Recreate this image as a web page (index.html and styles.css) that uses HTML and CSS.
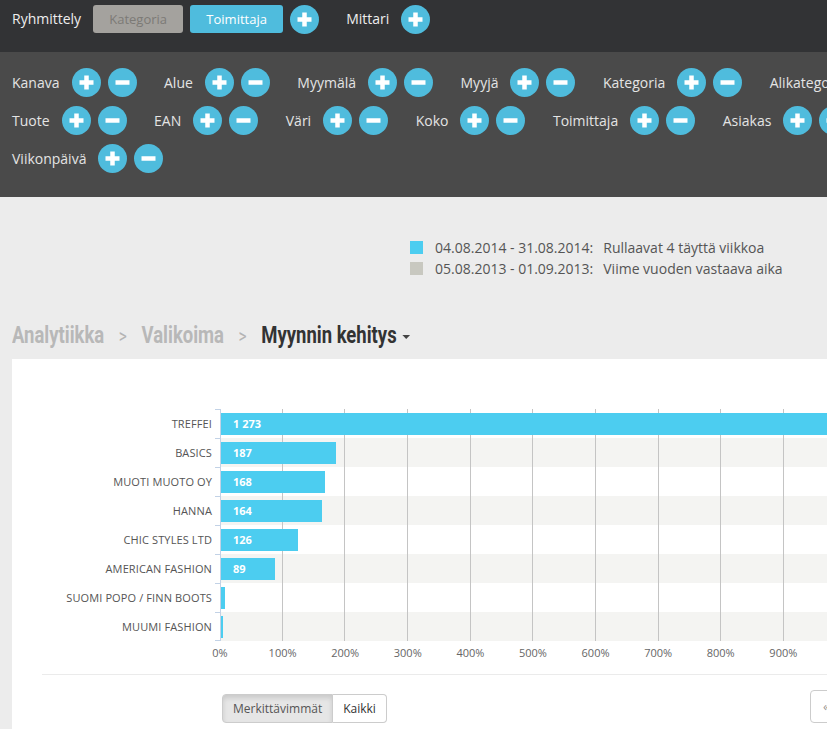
FILE: index.html
```html
<!DOCTYPE html>
<html lang="fi">
<head>
<meta charset="utf-8">
<title>Myynnin kehitys</title>
<link rel="stylesheet" href="styles.css">
</head>
<body>
<header class="topbar">
  <span class="tlabel">Ryhmittely</span>
  <span class="tbtn tbtn-off">Kategoria</span>
  <span class="tbtn tbtn-on">Toimittaja</span>
  <svg class="ic" viewBox="0 0 29 29"><circle cx="14.5" cy="14.5" r="14.5"/><path d="M7.5 14.5h14M14.5 7.5v14"/></svg>
  <span class="tlabel tlabel-gap">Mittari</span>
  <svg class="ic" viewBox="0 0 29 29"><circle cx="14.5" cy="14.5" r="14.5"/><path d="M7.5 14.5h14M14.5 7.5v14"/></svg>
</header>

<section class="filters">
  <div class="frows">
    <div class="fitem"><span class="flabel">Kanava</span><svg class="ic" viewBox="0 0 29 29"><circle cx="14.5" cy="14.5" r="14.5"/><path d="M7.5 14.5h14M14.5 7.5v14"/></svg><svg class="ic" viewBox="0 0 29 29"><circle cx="14.5" cy="14.5" r="14.5"/><path d="M7.5 14.5h14"/></svg></div>
    <div class="fitem"><span class="flabel">Alue</span><svg class="ic" viewBox="0 0 29 29"><circle cx="14.5" cy="14.5" r="14.5"/><path d="M7.5 14.5h14M14.5 7.5v14"/></svg><svg class="ic" viewBox="0 0 29 29"><circle cx="14.5" cy="14.5" r="14.5"/><path d="M7.5 14.5h14"/></svg></div>
    <div class="fitem"><span class="flabel">Myymälä</span><svg class="ic" viewBox="0 0 29 29"><circle cx="14.5" cy="14.5" r="14.5"/><path d="M7.5 14.5h14M14.5 7.5v14"/></svg><svg class="ic" viewBox="0 0 29 29"><circle cx="14.5" cy="14.5" r="14.5"/><path d="M7.5 14.5h14"/></svg></div>
    <div class="fitem"><span class="flabel">Myyjä</span><svg class="ic" viewBox="0 0 29 29"><circle cx="14.5" cy="14.5" r="14.5"/><path d="M7.5 14.5h14M14.5 7.5v14"/></svg><svg class="ic" viewBox="0 0 29 29"><circle cx="14.5" cy="14.5" r="14.5"/><path d="M7.5 14.5h14"/></svg></div>
    <div class="fitem"><span class="flabel">Kategoria</span><svg class="ic" viewBox="0 0 29 29"><circle cx="14.5" cy="14.5" r="14.5"/><path d="M7.5 14.5h14M14.5 7.5v14"/></svg><svg class="ic" viewBox="0 0 29 29"><circle cx="14.5" cy="14.5" r="14.5"/><path d="M7.5 14.5h14"/></svg></div>
    <div class="fitem"><span class="flabel">Alikategoria</span><svg class="ic" viewBox="0 0 29 29"><circle cx="14.5" cy="14.5" r="14.5"/><path d="M7.5 14.5h14M14.5 7.5v14"/></svg><svg class="ic" viewBox="0 0 29 29"><circle cx="14.5" cy="14.5" r="14.5"/><path d="M7.5 14.5h14"/></svg></div>
    <div class="fitem"><span class="flabel">Tuote</span><svg class="ic" viewBox="0 0 29 29"><circle cx="14.5" cy="14.5" r="14.5"/><path d="M7.5 14.5h14M14.5 7.5v14"/></svg><svg class="ic" viewBox="0 0 29 29"><circle cx="14.5" cy="14.5" r="14.5"/><path d="M7.5 14.5h14"/></svg></div>
    <div class="fitem"><span class="flabel">EAN</span><svg class="ic" viewBox="0 0 29 29"><circle cx="14.5" cy="14.5" r="14.5"/><path d="M7.5 14.5h14M14.5 7.5v14"/></svg><svg class="ic" viewBox="0 0 29 29"><circle cx="14.5" cy="14.5" r="14.5"/><path d="M7.5 14.5h14"/></svg></div>
    <div class="fitem"><span class="flabel">Väri</span><svg class="ic" viewBox="0 0 29 29"><circle cx="14.5" cy="14.5" r="14.5"/><path d="M7.5 14.5h14M14.5 7.5v14"/></svg><svg class="ic" viewBox="0 0 29 29"><circle cx="14.5" cy="14.5" r="14.5"/><path d="M7.5 14.5h14"/></svg></div>
    <div class="fitem"><span class="flabel">Koko</span><svg class="ic" viewBox="0 0 29 29"><circle cx="14.5" cy="14.5" r="14.5"/><path d="M7.5 14.5h14M14.5 7.5v14"/></svg><svg class="ic" viewBox="0 0 29 29"><circle cx="14.5" cy="14.5" r="14.5"/><path d="M7.5 14.5h14"/></svg></div>
    <div class="fitem"><span class="flabel">Toimittaja</span><svg class="ic" viewBox="0 0 29 29"><circle cx="14.5" cy="14.5" r="14.5"/><path d="M7.5 14.5h14M14.5 7.5v14"/></svg><svg class="ic" viewBox="0 0 29 29"><circle cx="14.5" cy="14.5" r="14.5"/><path d="M7.5 14.5h14"/></svg></div>
    <div class="fitem"><span class="flabel">Asiakas</span><svg class="ic" viewBox="0 0 29 29"><circle cx="14.5" cy="14.5" r="14.5"/><path d="M7.5 14.5h14M14.5 7.5v14"/></svg><svg class="ic" viewBox="0 0 29 29"><circle cx="14.5" cy="14.5" r="14.5"/><path d="M7.5 14.5h14"/></svg></div>
    <div class="fitem"><span class="flabel">Viikonpäivä</span><svg class="ic" viewBox="0 0 29 29"><circle cx="14.5" cy="14.5" r="14.5"/><path d="M7.5 14.5h14M14.5 7.5v14"/></svg><svg class="ic" viewBox="0 0 29 29"><circle cx="14.5" cy="14.5" r="14.5"/><path d="M7.5 14.5h14"/></svg></div>
  </div>
</section>

<div class="legend">
  <span class="sw sw-cur"></span><span class="ldate">04.08.2014 - 31.08.2014:</span><span class="ldesc">Rullaavat 4 täyttä viikkoa</span>
  <span class="sw sw-prev"></span><span class="ldate">05.08.2013 - 01.09.2013:</span><span class="ldesc">Viime vuoden vastaava aika</span>
</div>

<nav class="crumbs">
  <span class="crumbs-inner"><span class="crumb">Analytiikka</span><span class="csep">&gt;</span><span class="crumb">Valikoima</span><span class="csep">&gt;</span><span class="crumb crumb-cur">Myynnin kehitys</span><span class="caret"></span></span>
</nav>

<main class="panel">
  <div class="chart">
    <div class="row"><span class="rlabel">TREFFEI</span><div class="rplot"><div class="bar" style="width:820px">1 273</div></div></div>
    <div class="row"><span class="rlabel">BASICS</span><div class="rplot"><div class="bar" style="width:115px">187</div></div></div>
    <div class="row"><span class="rlabel">MUOTI MUOTO OY</span><div class="rplot"><div class="bar" style="width:104px">168</div></div></div>
    <div class="row"><span class="rlabel">HANNA</span><div class="rplot"><div class="bar" style="width:101px">164</div></div></div>
    <div class="row"><span class="rlabel">CHIC STYLES LTD</span><div class="rplot"><div class="bar" style="width:77px">126</div></div></div>
    <div class="row"><span class="rlabel">AMERICAN FASHION</span><div class="rplot"><div class="bar" style="width:54px">89</div></div></div>
    <div class="row"><span class="rlabel">SUOMI POPO / FINN BOOTS</span><div class="rplot"><div class="bar" style="width:4px"></div></div></div>
    <div class="row row-last"><span class="rlabel">MUUMI FASHION</span><div class="rplot"><div class="bar" style="width:1.5px"></div></div></div>
  </div>
  <div class="axis">
    <span>0%</span><span>100%</span><span>200%</span><span>300%</span><span>400%</span><span>500%</span><span>600%</span><span>700%</span><span>800%</span><span>900%</span>
  </div>
  <div class="sep"></div>
  <div class="foot">
    <div class="btn-group"><span class="fbtn fbtn-active">Merkittävimmät</span><span class="fbtn">Kaikki</span></div>
    <span class="pbtn">«</span>
  </div>
</main>
</body>
</html>
```

FILE: styles.css
```css
html, body {
  margin: 0;
  height: 100%;
  overflow: hidden;
}

body {
  background: #ececec;
  font-family: "Open Sans", "DejaVu Sans", sans-serif;
  color: #555;
}

/* icons */
.ic {
  width: 29px;
  height: 29px;
  flex: none;
  display: block;
}
.ic circle { fill: #4fbcdd; }
.ic path { stroke: #fff; stroke-width: 4.5; fill: none; }

/* top bar */
.topbar {
  height: 52px;
  box-sizing: border-box;
  background: #323335;
  padding: 5px 12px 0;
  display: flex;
  align-items: flex-start;
  column-gap: 7px;
}
.tlabel {
  color: #eeeeee;
  font-size: 14px;
  line-height: 28px;
  margin-right: 5px;
}
.tlabel-gap { margin-left: 20px; }
.tbtn {
  height: 28px;
  line-height: 28px;
  font-size: 13px;
  text-align: center;
  border-radius: 3px;
}
.tbtn-off { width: 90px; background: #a4a29e; color: #7c7a76; }
.tbtn-on { width: 93px; background: #4fbcdd; color: #ffffff; }

/* filter area */
.filters {
  height: 145px;
  box-sizing: border-box;
  background: #4a4a4a;
  padding: 16px 12px 0;
}
.frows {
  width: 965px;
  display: flex;
  flex-wrap: wrap;
  column-gap: 27.5px;
  row-gap: 9px;
}
.fitem {
  display: flex;
  align-items: center;
  gap: 7px;
  height: 29px;
}
.flabel {
  color: #e4e4e4;
  font-size: 14px;
  margin-right: 5px;
}

/* legend */
.legend {
  margin: 40px 0 0 410px;
  display: grid;
  grid-template-columns: 13px auto auto;
  justify-content: start;
  align-items: center;
  font-size: 14px;
  line-height: 21px;
  color: #555;
}
.sw { width: 13px; height: 13px; }
.sw-cur { background: #4ccdf0; }
.sw-prev { background: #c8c8c0; }
.ldate { margin-left: 12px; margin-right: 10px; }

/* breadcrumbs */
.crumbs {
  margin: 39px 0 0 12px;
  height: 34px;
  line-height: 34px;
  white-space: nowrap;
}
.crumbs-inner {
  display: inline-block;
  transform: scaleX(0.77);
  transform-origin: left center;
  font-family: Roboto, "Liberation Sans", sans-serif;
  font-weight: 700;
  font-size: 24px;
  color: #b8b8b8;
}
.csep {
  color: #b4b4b4;
  font-size: 20px;
  font-weight: 400;
  margin: 0 19px;
}
.crumb-cur { color: #333; }
.caret {
  display: inline-block;
  vertical-align: middle;
  margin-left: 7px;
  width: 0;
  height: 0;
  border-top: 4px solid #444;
  border-left: 5px solid transparent;
  border-right: 5px solid transparent;
}

/* panel & chart */
.panel {
  margin: 7px 0 0 12px;
  width: 1000px;
  height: 400px;
  box-sizing: border-box;
  background: #fff;
  padding-top: 50px;
}
.chart {
  --grid: linear-gradient(to right,
    transparent 61px, #c4c4c4 61px 62px,
    transparent 62px 123px, #c4c4c4 123px 124px,
    transparent 124px 186px, #c4c4c4 186px 187px,
    transparent 187px 249px, #c4c4c4 249px 250px,
    transparent 250px 311px, #c4c4c4 311px 312px,
    transparent 312px 374px, #c4c4c4 374px 375px,
    transparent 375px 437px, #c4c4c4 437px 438px,
    transparent 438px 499px, #c4c4c4 499px 500px,
    transparent 500px 562px, #c4c4c4 562px 563px,
    transparent 563px 624px, #c4c4c4 624px 625px,
    transparent 625px);
}
.row {
  display: flex;
  height: 29px;
}
.rlabel {
  width: 208px;
  flex: none;
  box-sizing: border-box;
  padding-right: 8px;
  text-align: right;
  font-size: 11px;
  letter-spacing: 0.12px;
  line-height: 29px;
  color: #555;
  white-space: nowrap;
  background: linear-gradient(#c2d2e6, #c2d2e6) right top / 5px 1px no-repeat;
}
.row-last .rlabel {
  background:
    linear-gradient(#c2d2e6, #c2d2e6) right top / 5px 1px no-repeat,
    linear-gradient(#c2d2e6, #c2d2e6) right bottom / 5px 1px no-repeat;
}
.rplot {
  flex: none;
  width: 780px;
  border-left: 1px solid #c2d2e6;
  background-image: var(--grid);
}
.row:nth-child(even) .rplot { background-color: #f4f4f2; }
.bar {
  height: 22px;
  margin-top: 4px;
  background: #4ccdf0;
  color: #fff;
  font-weight: 700;
  font-size: 11px;
  line-height: 22px;
  text-indent: 12px;
  white-space: nowrap;
  overflow: hidden;
}

.axis {
  display: flex;
  margin-left: 176.7px;
  height: 24px;
  line-height: 24px;
  font-size: 11px;
  color: #666;
}
.axis span {
  flex: none;
  width: 62.6px;
  text-align: center;
}

.sep {
  height: 1px;
  background: #ebebeb;
  margin: 9px 0 0 30px;
}
.foot {
  margin-left: 30px;
  width: 810px;
  display: flex;
  align-items: flex-start;
}
.btn-group {
  display: flex;
  margin: 19px 0 0 180px;
}
.fbtn {
  height: 27px;
  line-height: 27px;
  font-size: 12px;
  color: #333;
  background: #fff;
  border: 1px solid #ccc;
  padding: 0 10px;
}
.fbtn:first-child { border-radius: 4px 0 0 4px; }
.fbtn:last-child { border-radius: 0 4px 4px 0; border-left: 0; }
.fbtn-active {
  background: #e6e6e6;
  color: #555;
  box-shadow: inset 0 3px 5px rgba(0, 0, 0, 0.125);
}
.pbtn {
  margin: 15px 0 0 auto;
  width: 40px;
  height: 31px;
  line-height: 31px;
  border: 1px solid #ccc;
  border-radius: 4px;
  color: #999;
  font-size: 13px;
  text-indent: 12px;
}
```
